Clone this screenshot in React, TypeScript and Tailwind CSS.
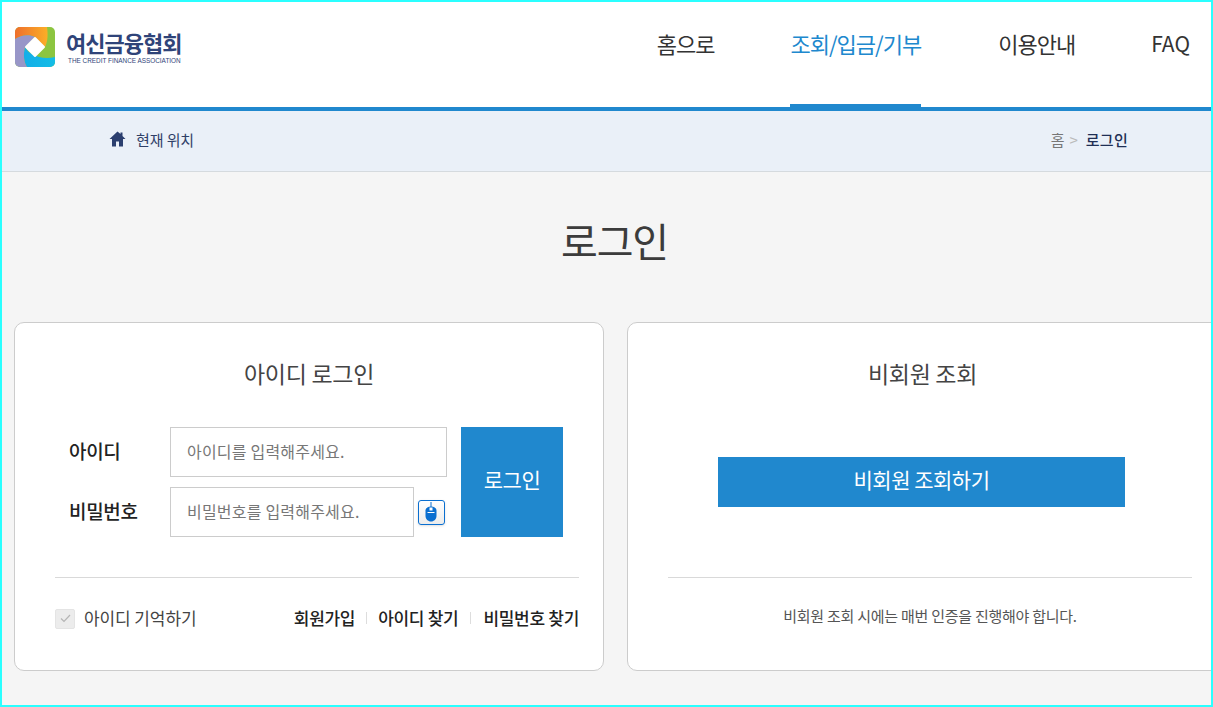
import React from "react";

const font = { fontFamily: '"Noto Sans CJK KR", "Noto Sans", sans-serif' };

function Logo() {
  return (
    <div className="flex items-center gap-[11px]">
      <svg width="40" height="40" viewBox="0 0 40 40" className="shrink-0">
        <defs>
          <clipPath id="lc"><rect width="40" height="40" rx="5" /></clipPath>
          <linearGradient id="o" x1="0" y1="0" x2="1" y2="0"><stop offset="0" stopColor="#ee6f2c" /><stop offset="1" stopColor="#fbae27" /></linearGradient>
          <linearGradient id="b" x1="0" y1="0" x2="1" y2="0"><stop offset="0" stopColor="#12aee8" /><stop offset="1" stopColor="#14bde6" /></linearGradient>
        </defs>
        <g clipPath="url(#lc)">
          <rect width="40" height="40" fill="#8cc540" />
          <path d="M0 0H32C33 7 33 14 30 20L20 10C14 7 6 8 0 12Z" fill="url(#o)" />
          <path d="M10 20C14 28 26 33 40 30V40H12C9 35 8 28 10 20Z" fill="url(#b)" />
          <path d="M0 12C6 8 14 7 20 10L10 20C8 28 9 35 12 40H0Z" fill="#9896c8" />
          <path d="M20 11L29 20L20 29L11 20Z" fill="#fff" stroke="#fff" strokeWidth="2" strokeLinejoin="round" />
        </g>
      </svg>
      <div className="flex flex-col">
        <span className="text-[22px] leading-[26px] font-bold tracking-[-1px] text-[#2f4479] whitespace-nowrap">여신금융협회</span>
        <span className="text-[6.400px] leading-[8px] mt-[2px] ml-[2px] font-medium text-[#2f4479] whitespace-nowrap" style={{ fontFamily: '"Liberation Sans", sans-serif' }}>THE CREDIT FINANCE ASSOCIATION</span>
      </div>
    </div>
  );
}

function MouseIcon() {
  return (
    <button className="w-[27px] h-[25px] ml-[4px] mt-[1px] rounded-[3px] border-[1.500px] border-[#0a6fd0] bg-gradient-to-b from-white to-[#ececec] shadow-sm overflow-hidden">
      <svg width="24" height="22" viewBox="0 0 24 22" className="block">
        <path d="M12 0V5" stroke="#0a6fd0" strokeWidth="1" />
        <path d="M6.500 8.500C6.500 6 9 4.500 12 4.500S17.500 6 17.500 8.500V14C17.500 17 15 19.500 12 19.500S6.500 17 6.500 14Z" fill="#0a6fd0" />
        <rect x="10.500" y="5.500" width="3" height="3" fill="#fff" />
        <rect x="8.500" y="10" width="7" height="1" fill="#fff" />
      </svg>
    </button>
  );
}

export default function App() {
  return (
    <div className="w-[1213px] h-[707px] border-2 border-[#2affff] overflow-hidden flex flex-col bg-[#f5f5f5] text-[#333]" style={font}>
      <header className="h-[109px] shrink-0 bg-white border-b-4 border-[#2088ce] flex justify-between pl-[13px] pr-[21px]">
        <div className="pt-[25px]"><Logo /></div>
        <nav className="flex text-[22px] tracking-[-1px] text-[#333]">
          <a className="mr-[76px] pt-[23px] leading-[36px] whitespace-nowrap">홈으로</a>
          <a className="mr-[77px] pt-[23px] leading-[36px] whitespace-nowrap text-[#2088ce] h-[105px] border-b-[3px] border-[#2088ce]">조회/입금/기부</a>
          <a className="mr-[76px] pt-[23px] leading-[36px] whitespace-nowrap">이용안내</a>
          <a className="pt-[23px] leading-[36px] whitespace-nowrap tracking-normal text-[21px]">FAQ</a>
        </nav>
      </header>

      <div className="h-[61px] shrink-0 bg-[#eaf0f8] border-b border-[#d5dade] flex items-center justify-between pl-[107px] pr-[83px] pb-[2px] text-[15px] tracking-[-0.1px]">
        <div className="flex items-center gap-[10px] text-[#2f4068]">
          <svg width="17" height="16" viewBox="0 0 17 16" className="mb-[3px]">
            <path d="M8.500 0.500L0.500 8H3V15.500H7V10.500H10V15.500H14V8H16.500L13.500 5V1.500H11.500V3Z" fill="#2b3f6f" />
          </svg>
          <span>현재 위치</span>
        </div>
        <div className="flex items-center">
          <span className="text-[#777]">홈</span>
          <span className="text-[#bbb] ml-[5px] mr-[8px]">&gt;</span>
          <span className="text-[#1f2f55] font-medium tracking-[0.3px]">로그인</span>
        </div>
      </div>

      <h1 className="text-center text-[40px] leading-[58px] mt-[39px] font-normal text-[#3c3c3c] tracking-[-1.200px] pl-[16px]">로그인</h1>

      <div className="flex gap-[23px] pl-[12px] mt-[53px] items-start">
        <section className="w-[590px] h-[349px] shrink-0 bg-white border border-[#ccc] rounded-[10px] pl-[40px] pr-[24px] flex flex-col">
          <h2 className="text-center text-[23px] leading-[34px] mt-[33px] text-[#444] tracking-[-0.3px] pr-[16px]">아이디 로그인</h2>
          <div className="flex mt-[37px] pl-[14px] justify-between pr-[16px]">
            <div className="flex flex-col gap-[10px]">
              <div className="flex items-center h-[50px]">
                <label className="w-[101px] text-[19px] font-medium tracking-[-0.3px] text-[#222] pb-[2px]">아이디</label>
                <input readOnly placeholder="아이디를 입력해주세요." className="w-[277px] h-[50px] border border-[#ccc] bg-white px-[16px] pb-[2px] text-[16px] tracking-[0.2px] placeholder:text-[#777] outline-none" />
              </div>
              <div className="flex items-center h-[50px]">
                <label className="w-[101px] text-[19px] font-medium tracking-[-0.3px] text-[#222] pb-[2px]">비밀번호</label>
                <input readOnly placeholder="비밀번호를 입력해주세요." className="w-[244px] h-[50px] border border-[#ccc] bg-white px-[16px] pb-[2px] text-[16px] tracking-[0.2px] placeholder:text-[#777] outline-none" />
                <MouseIcon />
              </div>
            </div>
            <button className="w-[102px] h-[110px] bg-[#2088ce] text-white text-[21px] tracking-[-0.5px] pb-[4px]">로그인</button>
          </div>
          <div className="border-t border-[#d9d9d9] mt-[40px]" />
          <div className="flex items-center justify-between mt-[27px] text-[17px] tracking-[-0.1px]">
            <label className="flex items-center gap-[9px] text-[#444]">
              <span className="w-[20px] h-[20px] bg-[#ececec] border border-[#e4e4e4] rounded-[2px] flex items-center justify-center mt-[2px]">
                <svg width="11" height="9" viewBox="0 0 11 9"><path d="M1 4.500L4 7.500L10 1" fill="none" stroke="#b5b5b5" strokeWidth="1.200" /></svg>
              </span>
              아이디 기억하기
            </label>
            <div className="flex items-center font-medium text-[#222] tracking-[-0.3px]">
              <a>회원가입</a>
              <span className="w-px h-[12px] bg-[#ddd] mx-[11px]" />
              <a>아이디 찾기</a>
              <span className="w-px h-[12px] bg-[#ddd] mx-[12px]" />
              <a>비밀번호 찾기</a>
            </div>
          </div>
        </section>

        <section className="w-[640px] h-[349px] shrink-0 bg-white border border-[#ccc] rounded-[10px] pl-[40px] flex flex-col">
          <div className="w-[524px] flex flex-col">
            <h2 className="w-[509px] text-center text-[23px] leading-[34px] mt-[33px] text-[#444] tracking-[-0.3px]">비회원 조회</h2>
            <button className="ml-[50px] w-[407px] h-[50px] mt-[67px] bg-[#2088ce] text-white text-[21px] tracking-[-0.5px] pb-[4px]">비회원 조회하기</button>
            <div className="border-t border-[#d9d9d9] mt-[70px]" />
            <p className="text-center mt-[27px] text-[15px] tracking-[-0.25px] text-[#555] whitespace-nowrap">비회원 조회 시에는 매번 인증을 진행해야 합니다.</p>
          </div>
        </section>
      </div>
    </div>
  );
}
